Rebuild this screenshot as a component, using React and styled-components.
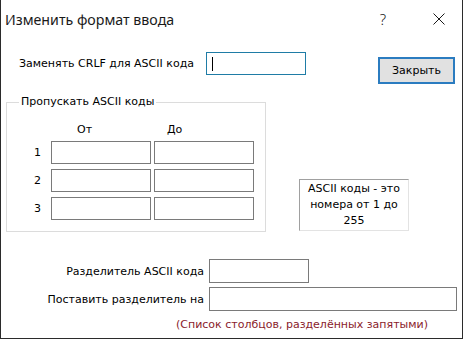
import { createGlobalStyle, styled } from "styled-components";
import { Fragment } from "react";

const GlobalStyle = createGlobalStyle`
	html, body {
		margin: 0;
		padding: 0;
		background: #ffffff;
	}
	* {
		box-sizing: border-box;
	}
`;

const Window = styled.div`
	width: 463px;
	height: 339px;
	background: #ffffff;
	border: 1px solid #2b2b2b;
	border-top: none;
	display: flex;
	flex-direction: column;
	font-family: "DejaVu Sans", Tahoma, sans-serif;
	font-size: 11px;
	color: #000000;
	overflow: hidden;
`;

const TitleBar = styled.div`
	height: 38px;
	display: flex;
	align-items: center;
	padding-left: 4px;
`;

const Title = styled.div`
	font-family: "Noto Sans", "Open Sans", sans-serif;
	font-size: 14.2px;
	color: #1a1a1a;
`;

const Controls = styled.div`
	margin-left: auto;
	display: flex;
	align-items: center;
	gap: 47px;
	padding-right: 17px;
`;

const Help = styled.span`
	font-family: "Noto Sans", sans-serif;
	font-size: 15px;
	font-weight: 300;
	color: #1a1a1a;
`;

const CloseIcon = () => (
	<svg width="12" height="12" viewBox="0 0 12 12">
		<path d="M0.5 0.5 L11.5 11.5 M11.5 0.5 L0.5 11.5" stroke="#1a1a1a" strokeWidth="1" />
	</svg>
);

const TopRow = styled.div`
	display: flex;
	align-items: flex-start;
	margin-top: 14px;
	padding-left: 18px;
	padding-right: 7px;
`;

const FieldLine = styled.div`
	display: flex;
	align-items: center;
	gap: ${({ $gap }) => $gap}px;
`;

const TextBox = styled.div`
	width: ${({ $w }) => $w}px;
	height: ${({ $h }) => $h || 23}px;
	border: 1px solid ${({ $focused }) => ($focused ? "#1f7ca6" : "#7a7a7a")};
	background: #ffffff;
	display: flex;
	align-items: center;
	padding-left: 5px;
`;

const Caret = styled.span`
	width: 1px;
	height: 14px;
	background: #000000;
`;

const Button = styled.button`
	margin-left: auto;
	margin-top: 5px;
	width: 77px;
	height: 27px;
	border: 2px solid #2b7cc0;
	background: #e1e1e1;
	font-family: inherit;
	font-size: 11px;
	color: #000000;
	padding: 0;
`;

const MiddleRow = styled.div`
	display: flex;
	margin-top: 18px;
	padding-left: 5px;
`;

const Group = styled.div`
	position: relative;
	border: 1px solid #dcdcdc;
	padding: 0 11px 11px 0;
`;

const Legend = styled.span`
	position: absolute;
	top: -8px;
	left: 12px;
	padding: 0 2px;
	background: #ffffff;
`;

const RangeGrid = styled.div`
	display: grid;
	grid-template-columns: 41px 100px 100px;
	grid-template-rows: 33px 23px 23px 23px;
	column-gap: 3px;
	row-gap: 5px;
`;

const Head = styled.div`
	align-self: end;
	padding-left: ${({ $offset }) => $offset}px;
`;

const RowNum = styled.div`
	align-self: center;
	text-align: right;
	padding-right: 7px;
`;

const Note = styled.div`
	align-self: flex-end;
	margin-left: 33px;
	margin-bottom: 1px;
	width: 110px;
	height: 52px;
	border: 1px solid #a0a0a0;
	border-right-color: #e3e3e3;
	border-bottom-color: #e3e3e3;
	display: flex;
	align-items: center;
	justify-content: center;
	text-align: center;
	line-height: 16px;
	padding: 0 3px;
`;

const FormGrid = styled.div`
	display: grid;
	grid-template-columns: 203px auto;
	justify-content: start;
	column-gap: 5px;
	row-gap: 4px;
	margin-top: 27px;
`;

const FieldLabel = styled.div`
	text-align: right;
	align-self: center;
`;

const Hint = styled.div`
	grid-column: 1 / span 2;
	padding-left: 175px;
	margin-top: 3px;
	color: #8a1c2b;
`;

const rows = [1, 2, 3];

const App = () => {
	return (
		<>
			<GlobalStyle />
			<Window>
				<TitleBar>
					<Title>Изменить формат ввода</Title>
					<Controls>
						<Help>?</Help>
						<CloseIcon />
					</Controls>
				</TitleBar>
				<TopRow>
					<FieldLine $gap={12}>
						<span>Заменять CRLF для ASCII кода</span>
						<TextBox $w={100} $focused>
							<Caret />
						</TextBox>
					</FieldLine>
					<Button>Закрыть</Button>
				</TopRow>
				<MiddleRow>
					<Group>
						<Legend>Пропускать ASCII коды</Legend>
						<RangeGrid>
							<div />
							<Head $offset={26}>От</Head>
							<Head $offset={13}>До</Head>
							{rows.map((n) => (
								<Fragment key={n}>
									<RowNum>{n}</RowNum>
									<TextBox $w={100} />
									<TextBox $w={100} />
								</Fragment>
							))}
						</RangeGrid>
					</Group>
					<Note>ASCII коды - это номера от 1 до 255</Note>
				</MiddleRow>
				<FormGrid>
					<FieldLabel>Разделитель ASCII кода</FieldLabel>
					<TextBox $w={100} $h={24} />
					<FieldLabel>Поставить разделитель на</FieldLabel>
					<TextBox $w={248} $h={24} />
					<Hint>(Список столбцов, разделённых запятыми)</Hint>
				</FormGrid>
			</Window>
		</>
	);
};

export default App;
